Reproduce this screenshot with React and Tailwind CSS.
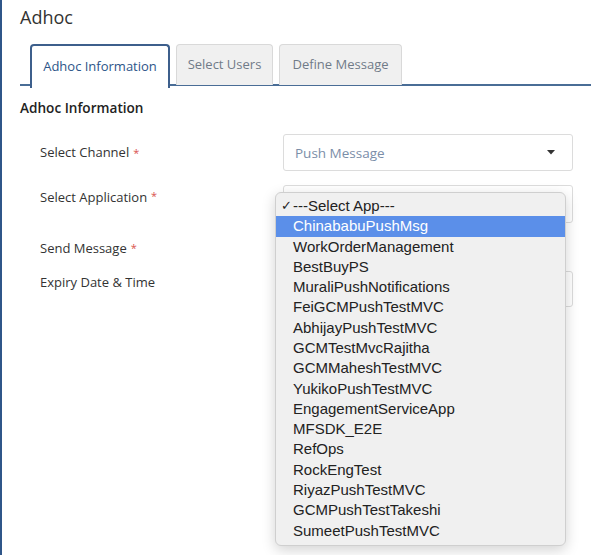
import { useState } from 'react';

const APPS = [
  'ChinababuPushMsg',
  'WorkOrderManagement',
  'BestBuyPS',
  'MuraliPushNotifications',
  'FeiGCMPushTestMVC',
  'AbhijayPushTestMVC',
  'GCMTestMvcRajitha',
  'GCMMaheshTestMVC',
  'YukikoPushTestMVC',
  'EngagementServiceApp',
  'MFSDK_E2E',
  'RefOps',
  'RockEngTest',
  'RiyazPushTestMVC',
  'GCMPushTestTakeshi',
  'SumeetPushTestMVC'
];

const TABS = [
  { label: 'Adhoc Information', w: 'w-[140px]' },
  { label: 'Select Users', w: 'w-[97px]' },
  { label: 'Define Message', w: 'w-[123px]' }
];

function Req() {
  return <span className="text-[#d9534f] text-[11px] ml-1 align-top">*</span>;
}

function AppMenu({ selected }) {
  return (
    <div
      className="absolute left-[273px] top-[192px] w-[291px] h-[354px] bg-[#f0f0f0] border border-[#cfcfcf] rounded-[6px] shadow-[0_4px_14px_rgba(0,0,0,0.18)] pt-[3px]"
      style={{ fontFamily: '"Liberation Sans", Arial, sans-serif' }}
    >
      <div className="relative h-[20.3px] flex items-center pl-[17px] text-[15px] text-[#222]">
        <span className="absolute left-[5px] text-[13px]">✓</span>
        ---Select App---
      </div>
      {APPS.map(a => (
        <div
          key={a}
          className={`h-[20.3px] flex items-center pl-[17px] text-[15px] ${a === selected ? 'bg-[#5b8fe9] text-white' : 'text-[#222]'}`}
        >
          {a}
        </div>
      ))}
    </div>
  );
}

export default function App() {
  const [tab] = useState(0);

  return (
    <div
      className="relative h-[555px] w-[591px] overflow-hidden bg-white border-l-2 border-[#2f5689] pl-[18px] text-[#333]"
      style={{ fontFamily: '"Open Sans", "Noto Sans", sans-serif' }}
    >
      <h1 className="text-[18px] leading-none pt-[8px] text-[#333]">Adhoc</h1>

      <div className="mt-[18px] flex gap-[6px] pl-[10px] border-b-2 border-[#4a6d96] h-[42px]">
        {TABS.map((t, i) => (
          <div
            key={t.label}
            className={`${t.w} flex items-center justify-center text-[13px] rounded-t-[4px] ${
              i === tab
                ? 'bg-white border-2 border-b-0 border-[#3d5f8c] text-[#2d5589] -mb-[2px] h-[44px]'
                : 'bg-[#f0f0f0] border border-b-0 border-[#d9d9d9] text-[#707b88] h-[41px]'
            }`}
          >
            {t.label}
          </div>
        ))}
      </div>

      <h2 className="mt-[12px] text-[13.6px] font-semibold text-[#222]">Adhoc Information</h2>

      <div className="mt-[16px] pl-[20px] flex flex-col text-[13px] text-[#333]">
        <div className="flex h-[37px]">
          <div className="w-[243px] flex items-center">Select Channel<Req /></div>
          <div className="w-[290px] border border-[#dcdcdc] rounded-[3px] flex items-center justify-between px-[11px] text-[13.5px] text-[#7b8ea8]">
            Push Message
            <svg width="8" height="5" viewBox="0 0 10 6" className="mr-[6px]">
              <path d="M0 0 L10 0 L5 5.5 Z" fill="#333" />
            </svg>
          </div>
        </div>

        <div className="flex h-[38px] mt-[14px]">
          <div className="w-[243px] pt-[3px]">Select Application<Req /></div>
          <div className="w-[290px] border border-[#dcdcdc] rounded-[3px]" />
        </div>

        <div className="flex h-[24px] mt-[13px]">
          <div className="w-[243px] flex items-center">Send Message<Req /></div>
        </div>

        <div className="flex h-[36px] mt-[11px]">
          <div className="w-[243px] pt-[2px]">Expiry Date &amp; Time</div>
          <div className="w-[290px] border border-[#dcdcdc] rounded-[3px]" />
        </div>
      </div>

      <AppMenu selected="ChinababuPushMsg" />
    </div>
  );
}
